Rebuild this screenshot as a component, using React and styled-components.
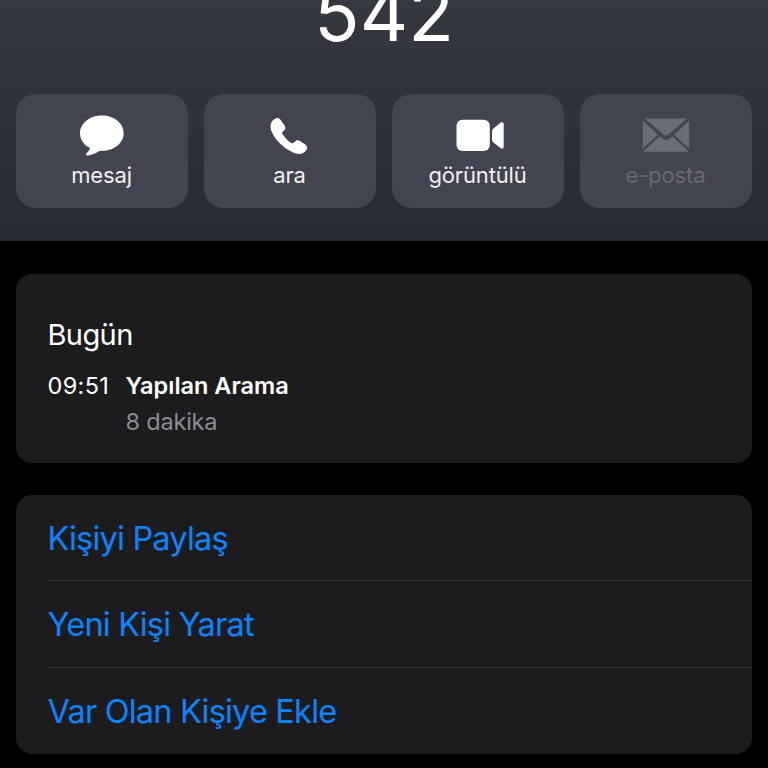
import styled, { createGlobalStyle } from 'styled-components';

const MessageIcon = () => (
  <Icon viewBox="0 0 52 44">
    <path d="M26 1.500C13.800 1.500 4 9.300 4 19.200c0 6.100 3.600 11.300 9.200 14.400.7.400.8 1 .5 1.700-.6 1.500-1.900 2.600-3.200 4.100-.9 1.100-.2 2.100 1 2 4.300-.4 8-1.900 10.800-3.900.8-.6 1.600-.8 2.600-.8h1.100c12.200 0 21.700-7.800 21.700-17.500S38.200 1.500 26 1.500z" />
  </Icon>
);

const PhoneIcon = () => (
  <Icon viewBox="0 0 52 44">
    <path d="M9 6.200l1.900-1.400c1.900-1.300 4-1.100 5.400.8l4.200 5.800c1.300 1.900 1.100 3.500-.4 5l-1.500 1.400c-.7.700-.7 1.400-.2 2.200 2.100 3.500 5.400 6.900 8.900 9 .8.500 1.600.5 2.300-.2l1.500-1.400c1.500-1.300 3.200-1.500 4.900-.4l5.600 3.800c1.900 1.400 2 3.400.8 5.200l-1.300 1.500c-2.800 3-7.400 3.100-12.300.8C19.300 34.200 11.100 26.200 7.700 17.600 6 13.200 6.100 8.600 9 6.200z" />
  </Icon>
);

const VideoIcon = () => (
  <Icon viewBox="0 0 52 44">
    <rect x="4.500" y="5.700" width="33.300" height="31.300" rx="6" />
    <path d="M40 17.300c0-1 .4-1.900 1.200-2.600l7.300-5.900c1.400-1.100 3.200-.5 3.200 1.300v22.700c0 1.800-1.800 2.400-3.200 1.300l-7.300-5.900c-.8-.7-1.200-1.600-1.200-2.600z" />
  </Icon>
);

const MailIcon = () => (
  <Icon viewBox="0 0 52 44">
    <path d="M4.900 4.400h42.200L28 20.800c-1.300 1.100-2.700 1.100-4 0z" />
    <path d="M2.800 6.600L17.800 20.800 2.800 34.500z" />
    <path d="M49.200 6.600L34.200 20.800l15 13.700z" />
    <path d="M19.500 22.300l2.500 2c2.500 2 5.500 2 8 0l2.500-2 16 14.900c-.5.500-1.200.6-2 .6H5.500c-.8 0-1.500-.1-2-.6z" />
  </Icon>
);

const actions = [
  { label: 'mesaj', icon: <MessageIcon /> },
  { label: 'ara', icon: <PhoneIcon /> },
  { label: 'görüntülü', icon: <VideoIcon /> },
  { label: 'e-posta', icon: <MailIcon />, disabled: true },
];

const options = ['Kişiyi Paylaş', 'Yeni Kişi Yarat', 'Var Olan Kişiye Ekle'];

const App = () => {
  return (
    <>
      <GlobalStyle />
      <Screen>
        <Header>
          <PhoneNumber>542</PhoneNumber>
          <Actions>
            {actions.map(({ label, icon, disabled }) => (
              <ActionButton key={label} disabled={disabled}>
                {icon}
                <ActionLabel>{label}</ActionLabel>
              </ActionButton>
            ))}
          </Actions>
        </Header>
        <CallCard>
          <Day>Bugün</Day>
          <CallRow>
            <Time>09:51</Time>
            <div>
              <CallType>Yapılan Arama</CallType>
              <Duration>8 dakika</Duration>
            </div>
          </CallRow>
        </CallCard>
        <OptionList>
          {options.map((option) => (
            <Option key={option}>{option}</Option>
          ))}
        </OptionList>
      </Screen>
    </>
  );
};

const GlobalStyle = createGlobalStyle`
  * {
    box-sizing: border-box;
  }

  body {
    margin: 0;
    background: #000;
    font-family: Inter, sans-serif;
  }
`;

const Screen = styled.main`
  height: 768px;
  overflow: hidden;
  background: #000;
  color: #fff;
`;

const Header = styled.header`
  display: flex;
  flex-direction: column;
  justify-content: flex-end;
  height: 241px;
  padding: 0 16px 33px;
  overflow: hidden;
  background: linear-gradient(#36383f, #282a32);
`;

const PhoneNumber = styled.h1`
  flex-shrink: 0;
  margin: 0 0 37px;
  font-size: 75px;
  font-weight: 400;
  line-height: 86px;
  text-align: center;
`;

const Actions = styled.div`
  display: grid;
  flex-shrink: 0;
  grid-template-columns: repeat(4, 1fr);
  gap: 16px;
`;

const ActionButton = styled.button`
  display: flex;
  flex-direction: column;
  align-items: center;
  height: 114px;
  padding: 20px 0 0;
  border: none;
  border-radius: 20px;
  background: #42444f;
  color: ${({ disabled }) => (disabled ? '#6b6d78' : '#fff')};
  font-family: inherit;
`;

const Icon = styled.svg`
  width: 52px;
  height: 44px;
  fill: currentColor;
`;

const ActionLabel = styled.span`
  margin: 3px 1px 0 0;
  font-size: 22px;
  line-height: 28px;
  letter-spacing: -0.15px;
  opacity: 0.93;
`;

const CallCard = styled.section`
  height: 189px;
  margin: 33px 16px 32px;
  padding: 43px 32px 0 31.5px;
  border-radius: 16px;
  background: #1c1c1e;
`;

const Day = styled.h2`
  margin: 0 0 15px;
  font-size: 29px;
  font-weight: 400;
  line-height: 36px;
  letter-spacing: -0.6px;
`;

const CallRow = styled.div`
  display: flex;
  font-size: 23.5px;
  line-height: 36px;
`;

const Time = styled.span`
  width: 78px;
  letter-spacing: 0.35px;
`;

const CallType = styled.div`
  font-weight: 600;
`;

const Duration = styled.div`
  color: #8d8d93;
  letter-spacing: -0.2px;
`;

const OptionList = styled.ul`
  height: 259px;
  margin: 0 16px;
  padding: 0 0 0 32px;
  border-radius: 16px;
  background: #1c1c1e;
  list-style: none;
`;

const Option = styled.li`
  height: 86.4px;
  color: #0a84ff;
  font-size: 32.5px;
  line-height: 88px;
  letter-spacing: -0.8px;
  text-indent: -0.5px;

  &:not(:last-child) {
    border-bottom: 1px solid #323234;
  }
`;

export default App;
